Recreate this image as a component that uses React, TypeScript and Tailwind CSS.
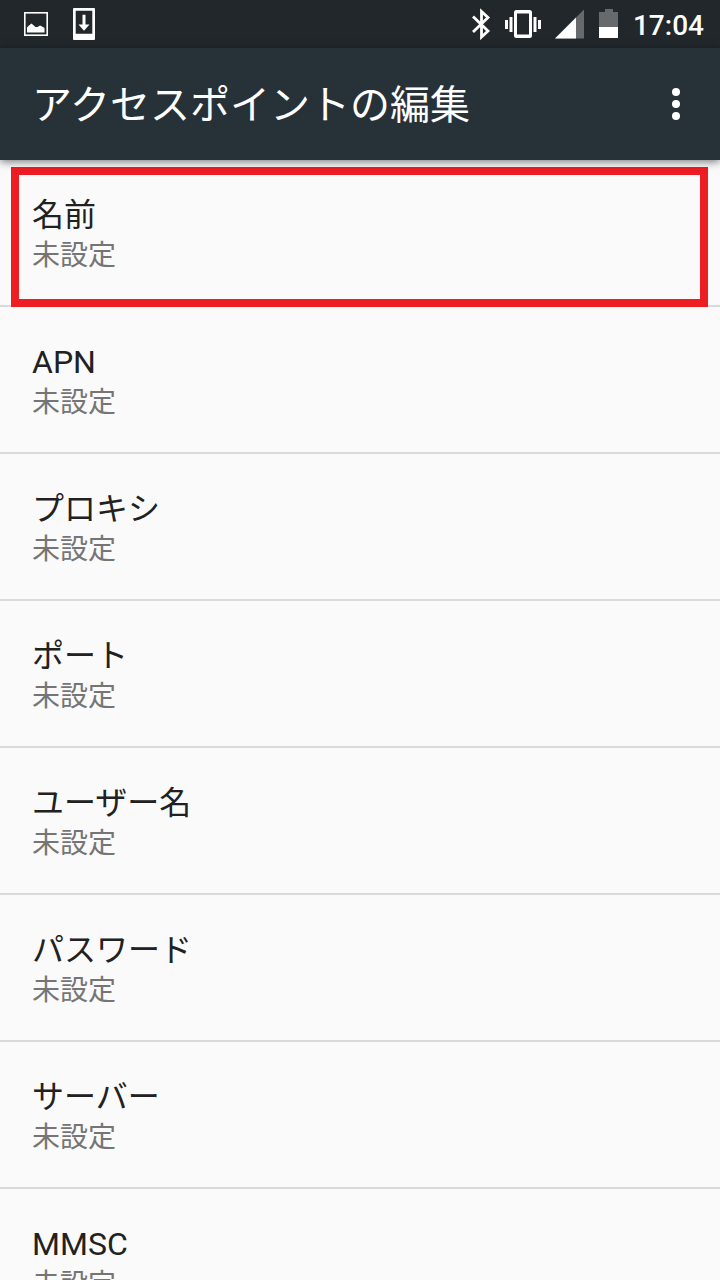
interface ApnField {
    id: string;
    label: string;
    highlighted?: boolean;
}

const APN_FIELDS: ApnField[] = [
    { id: "name", label: "名前", highlighted: true },
    { id: "apn", label: "APN" },
    { id: "proxy", label: "プロキシ" },
    { id: "port", label: "ポート" },
    { id: "username", label: "ユーザー名" },
    { id: "password", label: "パスワード" },
    { id: "server", label: "サーバー" },
    { id: "mmsc", label: "MMSC" },
];

const NOT_SET = "未設定";

const StatusBar = () => (
    <div className="flex h-12 shrink-0 items-center justify-between bg-[#21272b] pl-6 pr-4 text-white">
        <div className="flex items-center gap-6">
            <svg width="24" height="32" viewBox="0 0 24 32" fill="none">
                <rect x="0.8" y="4.8" width="22.4" height="22.4" stroke="currentColor" strokeWidth="1.6" />
                <path d="M3 24.5v-5l2-2 2.500-2 4 3.500h2l2.500-1.500 3 1.500 1.500 1v4.500z" fill="currentColor" />
            </svg>
            <svg width="24" height="32" viewBox="0 0 24 32" fill="currentColor">
                <path
                    fillRule="evenodd"
                    d="M2 0h20a1 1 0 0 1 1 1v30a1 1 0 0 1-1 1H2a1 1 0 0 1-1-1V1a1 1 0 0 1 1-1zM3.700 2.700v23h16.600v-23z"
                />
                <path d="M10.500 6.700h3v9.800h4L12 22.700 6.500 16.500h4z" />
            </svg>
        </div>

        <div className="flex items-center gap-3.5">
            <svg width="20" height="32" viewBox="0 0 20 32" fill="none" stroke="currentColor" strokeWidth="2.8">
                <path d="M2 8.500l15 14.500-6.500 6V3.500l6.500 6L2 24" />
            </svg>
            <svg width="36" height="32" viewBox="0 0 36 32" fill="currentColor">
                <path
                    fillRule="evenodd"
                    d="M11.500 2h13a2.500 2.500 0 0 1 2.500 2.500v23a2.500 2.500 0 0 1-2.500 2.500h-13a2.500 2.500 0 0 1-2.500-2.500v-23a2.500 2.500 0 0 1 2.500-2.500zM12 5.500v21h12v-21z"
                />
                <path d="M0 12h3v9H0zM4.500 9h3v15h-3zM28.500 9h3v15h-3zM33 12h3v9h-3z" />
            </svg>
            <svg width="30" height="32" viewBox="0 0 30 32" fill="currentColor">
                <path d="M0 30.500L29 1.500v29z" className="text-[#666a6d]" />
                <path d="M0 30.500L21 9.500v21z" />
            </svg>
            <svg width="20" height="32" viewBox="0 0 20 32" fill="currentColor">
                <path d="M6 1h8v3h5v16H0V4h6z" className="text-[#666a6d]" />
                <path d="M0 19h19v11H0z" />
            </svg>
            <span className="pt-1 text-[28px] leading-8 font-medium">17:04</span>
        </div>
    </div>
);

const AppBar = () => (
    <header className="relative z-10 flex h-28 shrink-0 items-center justify-between bg-[#263238] px-8 text-white shadow-[0_2px_8px_rgba(0,0,0,0.5)]">
        <h1 className="pt-1 text-[40px] leading-12">アクセスポイントの編集</h1>
        <button type="button" aria-label="その他のオプション" className="flex w-6 justify-center">
            <svg width="8" height="32" viewBox="0 0 8 32" fill="currentColor">
                <circle cx="4" cy="4" r="4" />
                <circle cx="4" cy="16" r="4" />
                <circle cx="4" cy="28" r="4" />
            </svg>
        </button>
    </header>
);

const FieldRow = ({ label, highlighted }: ApnField) => (
    <li className="relative">
        <button type="button" className="block w-full border-b-2 border-[#dadada] px-8 pt-[35px] pb-7 text-left">
            <span className="block text-[32px] leading-[40px] text-[#212121]">{label}</span>
            <span className="block text-[28px] leading-[42px] text-[#757575]">{NOT_SET}</span>
        </button>
        {highlighted && (
            <div className="pointer-events-none absolute top-[7px] right-3 bottom-0 left-[11px] border-8 border-[#ee1c23]" />
        )}
    </li>
);

export default function App() {
    return (
        <div
            lang="ja"
            className="flex h-screen flex-col bg-[#fafafa] font-['Roboto','Noto_Sans_CJK_JP',sans-serif]"
        >
            <StatusBar />
            <AppBar />
            <ul className="min-h-0 flex-1 overflow-y-auto [scrollbar-width:none]">
                {APN_FIELDS.map((field) => (
                    <FieldRow key={field.id} {...field} />
                ))}
            </ul>
        </div>
    );
}
